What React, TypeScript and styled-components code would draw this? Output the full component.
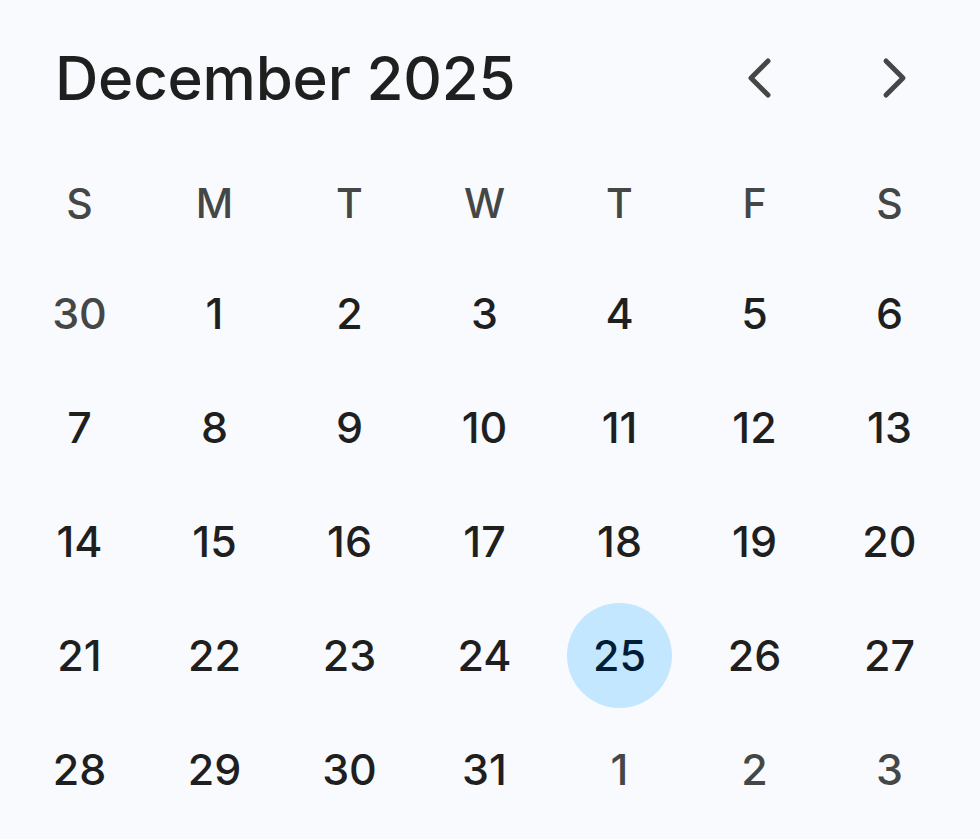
import React from "react";
import styled, { createGlobalStyle } from "styled-components";

const Global = createGlobalStyle`
  html, body { margin: 0; padding: 0; background: #f8fafd; }
  body { font-family: Inter, "Noto Sans", sans-serif; }
`;

const Wrap = styled.div`
  width: 980px;
  height: 839px;
  background: #f8fafd;
  box-sizing: border-box;
  padding: 0 12px;
  display: flex;
  flex-direction: column;
`;

const Header = styled.div`
  height: 152px;
  display: flex;
  align-items: flex-start;
  justify-content: space-between;
  padding: 40px 0 0 43px;
  box-sizing: border-box;
`;

const Title = styled.div`
  font-size: 60px;
  font-weight: 500;
  color: #1f1f1f;
  line-height: 76px;
  letter-spacing: -0.2px;
`;

const Nav = styled.div`
  display: flex;
  gap: 32px;
  margin-right: 25px;
`;

const NavBtn = styled.button`
  width: 100px;
  height: 76px;
  border: none;
  background: transparent;
  padding: 0;
  display: flex;
  align-items: center;
  justify-content: center;
  color: #444746;
`;

const Grid = styled.div`
  display: grid;
  grid-template-columns: repeat(7, 135px);
`;

const WeekRow = styled(Grid)`
  height: 104px;
`;

const Week = styled.div`
  display: flex;
  align-items: center;
  justify-content: center;
  font-size: 41px;
  font-weight: 500;
  color: #444746;
  margin-top: -3px;
`;

const Cell = styled.div`
  height: 114px;
  display: flex;
  align-items: center;
  justify-content: center;
`;

const Day = styled.div<{ $muted?: boolean; $today?: boolean }>`
  width: 105px;
  height: 105px;
  border-radius: 50%;
  display: flex;
  align-items: center;
  justify-content: center;
  font-size: 43px;
  font-weight: 500;
  color: ${(p) => (p.$today ? "#001d35" : p.$muted ? "#444746" : "#1f1f1f")};
  background: ${(p) => (p.$today ? "#c2e7ff" : "transparent")};
`;

const Chevron = ({ dir }: { dir: "left" | "right" }) => (
  <svg width="30" height="42" viewBox="0 0 30 42" fill="none">
    <path
      d={dir === "left" ? "M22 4 L5 21 L22 38" : "M8 4 L25 21 L8 38"}
      stroke="currentColor"
      strokeWidth="5"
      strokeLinecap="round"
      strokeLinejoin="round"
    />
  </svg>
);

const weekdays = ["S", "M", "T", "W", "T", "F", "S"];

const days: { n: number; muted?: boolean; today?: boolean }[] = [
  { n: 30, muted: true },
  ...Array.from({ length: 31 }, (_, i) => ({ n: i + 1, today: i + 1 === 25 })),
  { n: 1, muted: true },
  { n: 2, muted: true },
  { n: 3, muted: true },
];

export default function App() {
  return (
    <>
      <Global />
      <Wrap>
        <Header>
          <Title>December 2025</Title>
          <Nav>
            <NavBtn aria-label="Previous month">
              <Chevron dir="left" />
            </NavBtn>
            <NavBtn aria-label="Next month">
              <Chevron dir="right" />
            </NavBtn>
          </Nav>
        </Header>
        <WeekRow>
          {weekdays.map((w, i) => (
            <Week key={i}>{w}</Week>
          ))}
        </WeekRow>
        <Grid>
          {days.map((d, i) => (
            <Cell key={i}>
              <Day $muted={d.muted} $today={d.today}>
                {d.n}
              </Day>
            </Cell>
          ))}
        </Grid>
      </Wrap>
    </>
  );
}
